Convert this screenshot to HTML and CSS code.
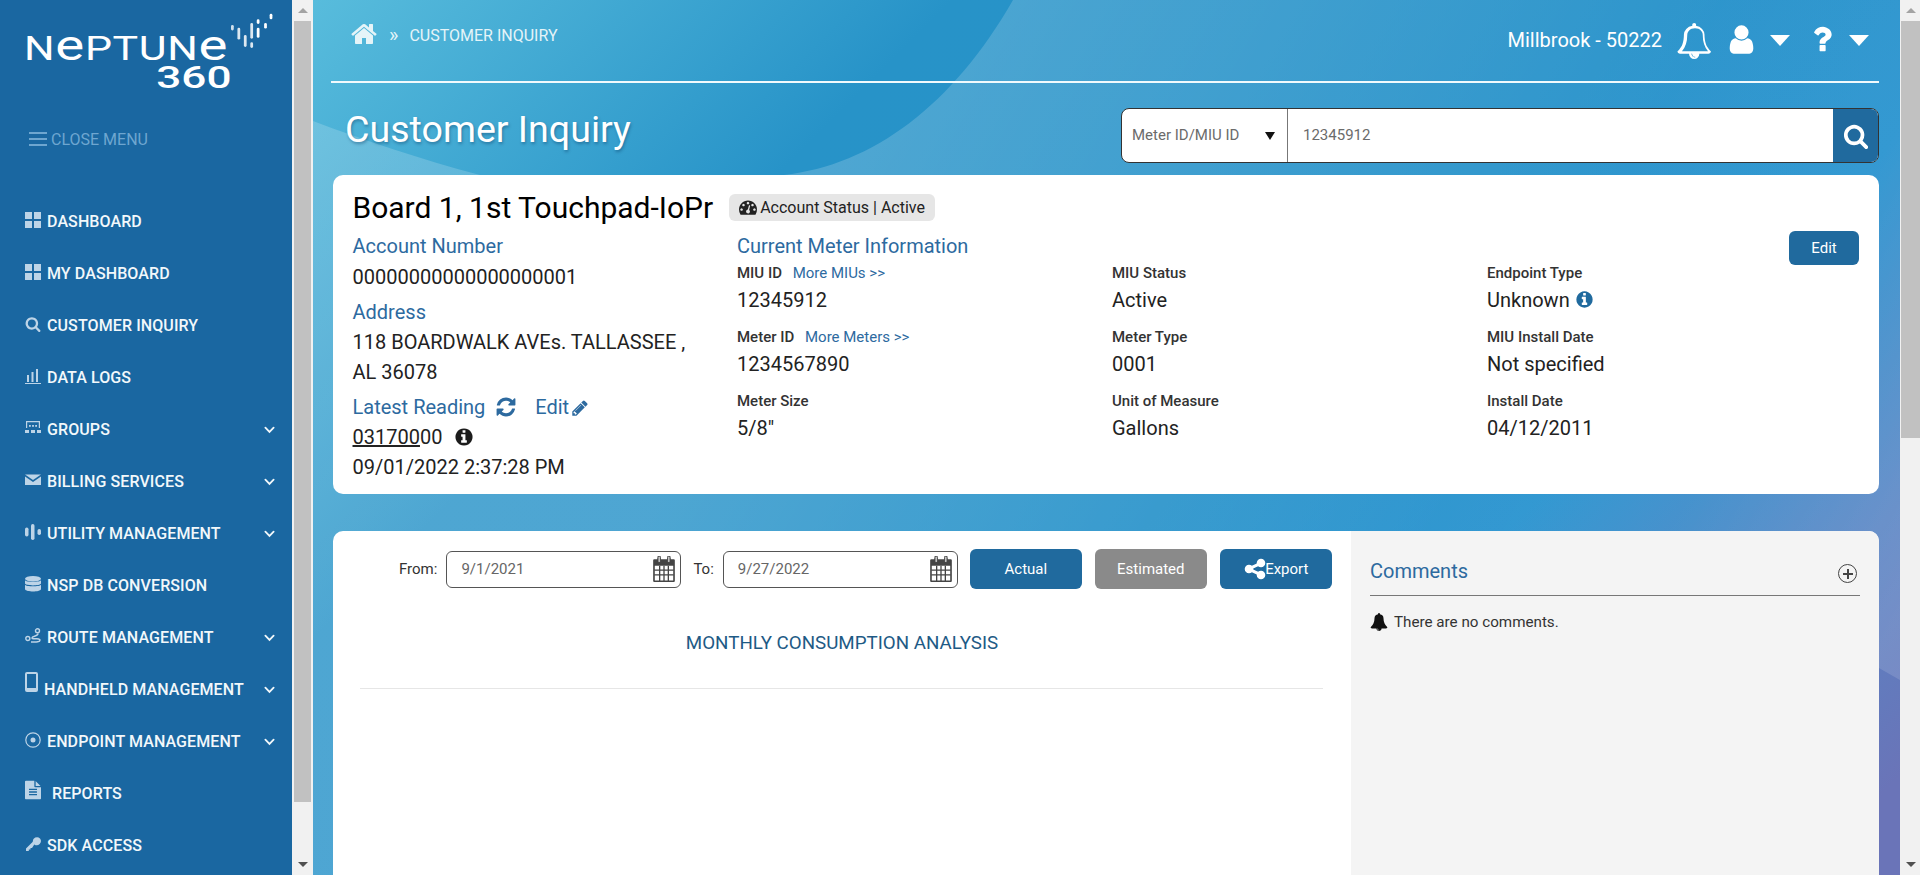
FILE: index.html
```html
<!DOCTYPE html>
<html lang="en">
<head>
    <meta charset="UTF-8">
    <meta name="viewport" content="width=device-width, initial-scale=1.0">
    <title>Customer Inquiry</title>
    <link rel="stylesheet" href="styles.css">
</head>
<body>

    <!-- Icon set -->
    <svg class="icon-defs" xmlns="http://www.w3.org/2000/svg">
        <symbol id="i-home" viewBox="0 0 1792 1792"><path d="M1472 992v480q0 26-19 45t-45 19h-384v-384h-256v384h-384q-26 0-45-19t-19-45v-480q0-1 .5-3t.5-3l575-474 575 474q1 2 1 6zm223-69l-62 74q-8 9-21 11h-3q-13 0-21-7l-692-577-692 577q-12 8-24 7-13-2-21-11l-62-74q-8-10-7-23.5t11-21.5l719-599q32-26 76-26t76 26l244 204v-195q0-14 9-23t23-9h192q14 0 23 9t9 23v408l219 182q10 8 11 21.5t-7 23.5z"/></symbol>
        <symbol id="i-search" viewBox="0 0 1792 1792"><path d="M1216 832q0-185-131.5-316.5t-316.5-131.5-316.5 131.5-131.5 316.5 131.5 316.5 316.5 131.5 316.5-131.5 131.5-316.5zm512 832q0 52-38 90t-90 38q-54 0-90-38l-343-342q-179 124-399 124-143 0-273.5-55.5t-225-150-150-225-55.5-273.5 55.5-273.5 150-225 225-150 273.5-55.5 273.5 55.5 225 150 150 225 55.5 273.5q0 220-124 399l343 343q37 37 37 90z"/></symbol>
        <symbol id="i-refresh" viewBox="0 0 1792 1792"><path d="M1639 1056q0 5-1 7-64 268-268 434.5t-478 166.5q-146 0-282.5-55t-243.5-157l-129 129q-19 19-45 19t-45-19-19-45v-448q0-26 19-45t45-19h448q26 0 45 19t19 45-19 45l-137 137q71 66 161 102t187 36q134 0 250-65t186-179q11-17 53-117 8-23 30-23h192q13 0 22.5 9.5t9.5 22.5zm25-800v448q0 26-19 45t-45 19h-448q-26 0-45-19t-19-45 19-45l138-138q-148-137-349-137-134 0-250 65t-186 179q-11 17-53 117-8 23-30 23h-199q-13 0-22.5-9.5t-9.5-22.5v-7q65-268 270-434.5t480-166.5q146 0 284 55.5t245 156.5l130-129q19-19 45-19t45 19 19 45z"/></symbol>
        <symbol id="i-pencil" viewBox="0 0 1792 1792"><path d="M491 1536l91-91-235-235-91 91v107h128v128h107zm523-928q0-22-22-22-10 0-17 7l-542 542q-7 7-7 17 0 22 22 22 10 0 17-7l542-542q7-7 7-17zm-54-192l416 416-832 832h-416v-416zm683 96q0 53-37 90l-166 166-416-416 166-165q36-38 90-38 53 0 91 38l235 234q37 39 37 91z"/></symbol>
        <symbol id="i-info" viewBox="0 0 1792 1792"><path d="M1152 1376v-160q0-14-9-23t-23-9h-96v-512q0-14-9-23t-23-9h-320q-14 0-23 9t-9 23v160q0 14 9 23t23 9h96v320h-96q-14 0-23 9t-9 23v160q0 14 9 23t23 9h448q14 0 23-9t9-23zm-128-896v-160q0-14-9-23t-23-9h-192q-14 0-23 9t-9 23v160q0 14 9 23t23 9h192q14 0 23-9t9-23zm640 416q0 209-103 385.5t-279.5 279.5-385.5 103-385.5-103-279.5-279.5-103-385.5 103-385.5 279.5-279.5 385.5-103 385.5 103 279.5 279.5 103 385.5z"/></symbol>
        <symbol id="i-user" viewBox="0 0 1792 1792"><path d="M1536 1399q0 109-62.5 187t-150.5 78h-854q-88 0-150.5-78t-62.5-187q0-85 8.5-160.5t31.5-152 58.5-131 94-89 134.5-34.5q131 128 313 128t313-128q76 0 134.5 34.5t94 89 58.5 131 31.5 152 8.5 160.5zm-256-887q0 159-112.5 271.5t-271.5 112.5-271.5-112.5-112.5-271.5 112.5-271.5 271.5-112.5 271.5 112.5 112.5 271.5z"/></symbol>
        <symbol id="i-bell-o" viewBox="0 0 1792 1792"><path d="M912 1696q0-16-16-16-59 0-101.5-42.5t-42.5-101.5q0-16-16-16t-16 16q0 73 51.5 124.5t124.5 51.5q16 0 16-16zm-666-288h1300q-266-300-266-832 0-51-24-105t-69-103-121.5-80.5-169.5-31.5-169.5 31.5-121.5 80.5-69 103-24 105q0 532-266 832zm1442 0q0 52-38 90t-90 38h-448q0 106-75 181t-181 75-181-75-75-181h-448q-52 0-90-38t-38-90q50-42 91-88t85-119.5 74.5-158.5 50-206 19.5-260q0-152 117-282.5t307-158.5q-8-19-8-39 0-40 28-68t68-28 68 28 28 68q0 20-8 39 190 28 307 158.5t117 282.5q0 139 19.5 260t50 206 74.5 158.5 85 119.5 91 88z"/></symbol>
        <symbol id="i-bell" viewBox="0 0 1792 1792"><path d="M912 1696q0-16-16-16-59 0-101.5-42.5t-42.5-101.5q0-16-16-16t-16 16q0 73 51.5 124.5t124.5 51.5q16 0 16-16zm816-288q0 52-38 90t-90 38h-448q0 106-75 181t-181 75-181-75-75-181h-448q-52 0-90-38t-38-90q190-161 287-397.5t97-498.5q0-165 96-262t264-117q-8-18-8-37 0-40 28-68t68-28 68 28 28 68q0 19-8 37 168 20 264 117t96 262q0 262 97 498.5t287 397.5z"/></symbol>
        <symbol id="i-question" viewBox="0 0 1792 1792"><path d="M1088 1256v240q0 16-12 28t-28 12h-240q-16 0-28-12t-12-28v-240q0-16 12-28t28-12h240q16 0 28 12t12 28zm316-600q0 54-15.5 101t-35 76.5-55 59.5-57.5 43.5-61 35.5q-41 23-68.5 65t-27.5 67q0 17-12 32.5t-28 15.5h-240q-15 0-25.5-18.5t-10.5-37.5v-45q0-83 65-156.5t143-108.5q59-27 84-56t25-76q0-42-46.5-74t-107.5-32q-65 0-108 29-35 25-107 115-13 16-31 16-12 0-25-8l-164-125q-13-10-15.5-25t5.5-28q160-266 464-266 80 0 161 31t146 83 106 127.5 41 158.5z"/></symbol>
        <symbol id="i-share" viewBox="0 0 1792 1792"><path d="M1344 1024q133 0 226.5 93.5t93.5 226.5-93.5 226.5-226.5 93.5-226.5-93.5-93.5-226.5q0-12 2-34l-360-180q-92 86-218 86-133 0-226.5-93.5t-93.5-226.5 93.5-226.5 226.5-93.5q126 0 218 86l360-180q-2-22-2-34 0-133 93.5-226.5t226.5-93.5 226.5 93.5 93.5 226.5-93.5 226.5-226.5 93.5q-126 0-218-86l-360 180q2 22 2 34t-2 34l360 180q92-86 218-86z"/></symbol>
        <symbol id="i-gauge" viewBox="0 0 1792 1792"><path d="M384 1152q0-53-37.5-90.5t-90.5-37.5-90.5 37.5-37.5 90.5 37.5 90.5 90.5 37.5 90.5-37.5 37.5-90.5zm192-448q0-53-37.5-90.5t-90.5-37.5-90.5 37.5-37.5 90.5 37.5 90.5 90.5 37.5 90.5-37.5 37.5-90.5zm428 481l101-382q6-26-7.5-48.5t-38.5-29.5-48 6.5-30 39.5l-101 382q-60 5-107 43.5t-63 98.5q-20 77 20 146t117 89 146-20 89-117q16-60-6-117t-72-91zm660-33q0-53-37.5-90.5t-90.5-37.5-90.5 37.5-37.5 90.5 37.5 90.5 90.5 37.5 90.5-37.5 37.5-90.5zm-640-640q0-53-37.5-90.5t-90.5-37.5-90.5 37.5-37.5 90.5 37.5 90.5 90.5 37.5 90.5-37.5 37.5-90.5zm448 192q0-53-37.5-90.5t-90.5-37.5-90.5 37.5-37.5 90.5 37.5 90.5 90.5 37.5 90.5-37.5 37.5-90.5zm320 448q0 261-141 483-19 29-54 29h-1402q-35 0-54-29-141-221-141-483 0-182 71-348t191-286 286-191 348-71 348 71 286 191 191 286 71 348z"/></symbol>
        <symbol id="i-file" viewBox="128 0 1536 1792"><path d="M1596 476q14 14 28 36h-472v-472q22 14 36 28zm-476 164h544v1056q0 40-28 68t-68 28h-1344q-40 0-68-28t-28-68v-1600q0-40 28-68t68-28h800v544q0 40 28 68t68 28zm160 736v-64q0-14-9-23t-23-9h-704q-14 0-23 9t-9 23v64q0 14 9 23t23 9h704q14 0 23-9t9-23zm0-256v-64q0-14-9-23t-23-9h-704q-14 0-23 9t-9 23v64q0 14 9 23t23 9h704q14 0 23-9t9-23zm0-256v-64q0-14-9-23t-23-9h-704q-14 0-23 9t-9 23v64q0 14 9 23t23 9h704q14 0 23-9t9-23z"/></symbol>
        <symbol id="i-grid" viewBox="0 0 16 16"><rect y="0" width="7" height="7"/><rect x="9" width="7" height="7"/><rect y="9" width="7" height="7"/><rect x="9" y="9" width="7" height="7"/></symbol>
        <symbol id="i-chart" viewBox="0 0 16 16"><rect x="2" y="7" width="2" height="7"/><rect x="6.5" y="4" width="2" height="10"/><rect x="11" y="1" width="2" height="13"/><rect y="15" width="16" height="1"/></symbol>
        <symbol id="i-groups" viewBox="0 0 16 16"><path d="M1 1h14v7h-1.2V2.2H2.200V8H1z"/><rect x="4" y="5" width="1.800" height="1.800"/><rect x="7.100" y="5" width="1.800" height="1.800"/><rect x="10.200" y="5" width="1.800" height="1.800"/><rect x="0" y="10" width="4" height="3"/><rect x="6" y="10" width="4" height="3"/><rect x="12" y="10" width="4" height="3"/></symbol>
        <symbol id="i-mail" viewBox="0 0 16 16"><path d="M0 2.500h16L8 8z"/><path d="M0 4.500V13h16V4.500L8 10z"/></symbol>
        <symbol id="i-utility" viewBox="0 0 16 16"><rect x="0" y="3.500" width="3.500" height="9" rx="1.700"/><rect x="6" y="0" width="3.500" height="16" rx="1.700"/><rect x="12.500" y="5" width="3.500" height="6" rx="1.700"/></symbol>
        <symbol id="i-db" viewBox="0 0 16 16"><ellipse cx="8" cy="2.800" rx="8" ry="2.800"/><path d="M0 4.300c1 2 15 2 16 0v3.200c-1 2.500-15 2.500-16 0z"/><path d="M0 8.800c1 2 15 2 16 0v4.400c-1 3-15 3-16 0z"/></symbol>
        <symbol id="i-route" viewBox="0 0 16 16"><circle cx="2.800" cy="10.500" r="2" fill="none" stroke="currentColor" stroke-width="1.400"/><circle cx="12.500" cy="2.800" r="2" fill="none" stroke="currentColor" stroke-width="1.400"/><path d="M13 5.500c0 3-6 2.500-6 4.500s8-.5 8 2-5 2-9 2" fill="none" stroke="currentColor" stroke-width="1.500"/></symbol>
        <symbol id="i-target" viewBox="0 0 16 16"><circle cx="8" cy="8" r="7.200" fill="none" stroke="currentColor" stroke-width="1.200"/><circle cx="8" cy="8" r="2.500"/></symbol>
        <symbol id="i-key" viewBox="0 0 16 16"><path d="M15 2.500a4.200 4.200 0 0 0-7.200 3.300L1 12.500V15h2.800v-1.500h1.700V12h1.500l2.300-3.500A4.200 4.200 0 0 0 15 2.500z"/></symbol>
        <symbol id="i-chevron" viewBox="0 0 12 8"><path d="M1.500 1.500L6 6l4.500-4.500" fill="none" stroke="currentColor" stroke-width="2" stroke-linecap="round"/></symbol>
        <symbol id="i-calendar" viewBox="0 0 22 24"><path d="M2 3h3V1.500h3V3h6V1.500h3V3h3a1 1 0 0 1 1 1v19a1 1 0 0 1-1 1H2a1 1 0 0 1-1-1V4a1 1 0 0 1 1-1z" fill="#444"/><path d="M2.500 9h17v13.500h-17z" fill="#fff"/><path d="M7 9v14M11 9v14M15 9v14M2 13h18M2 17.500h18" stroke="#444" stroke-width="1.200"/><rect x="5.500" y="0" width="2" height="6" rx="1" fill="#fff" stroke="#444"/><rect x="14.500" y="0" width="2" height="6" rx="1" fill="#fff" stroke="#444"/></symbol>
    </svg>

    <aside class="sidebar">
        <div class="logo">
            <div class="logo-name">N<span class="logo-e">e</span>PTUN<span class="logo-e">e</span></div>
            <div class="logo-sub"><span>360</span></div>
            <!-- Signal dots next to the logo -->
            <svg class="logo-signal" viewBox="0 0 50 50" fill="#fff">
                <rect x="0" y="14" width="3" height="6" rx="1.500" opacity=".8"/>
                <rect x="7" y="17" width="3" height="13" rx="1.500" opacity=".85"/>
                <rect x="14" y="25" width="3" height="13" rx="1.500" opacity=".85"/>
                <rect x="21" y="12" width="3" height="17" rx="1.500" opacity=".85"/>
                <rect x="21" y="33" width="3" height="6" rx="1.500" opacity=".85"/>
                <rect x="28" y="8" width="3" height="5" rx="1.500"/>
                <rect x="28" y="17" width="3" height="11" rx="1.500"/>
                <rect x="36" y="12" width="3" height="6" rx="1.500"/>
                <rect x="42" y="2" width="3" height="6" rx="1.500"/>
            </svg>
        </div>

        <div class="close-menu">
            <span class="burger"></span>
            CLOSE MENU
        </div>

        <ul class="menu">
            <li class="menu-item"><svg class="menu-icon"><use href="#i-grid"/></svg>Dashboard</li>
            <li class="menu-item"><svg class="menu-icon"><use href="#i-grid"/></svg>My Dashboard</li>
            <li class="menu-item"><svg class="menu-icon"><use href="#i-search"/></svg>Customer Inquiry</li>
            <li class="menu-item"><svg class="menu-icon"><use href="#i-chart"/></svg>Data Logs</li>
            <li class="menu-item"><svg class="menu-icon"><use href="#i-groups"/></svg>Groups<svg class="chevron"><use href="#i-chevron"/></svg></li>
            <li class="menu-item"><svg class="menu-icon"><use href="#i-mail"/></svg>Billing Services<svg class="chevron"><use href="#i-chevron"/></svg></li>
            <li class="menu-item"><svg class="menu-icon"><use href="#i-utility"/></svg>Utility Management<svg class="chevron"><use href="#i-chevron"/></svg></li>
            <li class="menu-item"><svg class="menu-icon"><use href="#i-db"/></svg>NSP DB Conversion</li>
            <li class="menu-item"><svg class="menu-icon"><use href="#i-route"/></svg>Route Management<svg class="chevron"><use href="#i-chevron"/></svg></li>
            <li class="menu-item"><span class="phone-icon"></span>Handheld Management<svg class="chevron"><use href="#i-chevron"/></svg></li>
            <li class="menu-item"><svg class="menu-icon"><use href="#i-target"/></svg>Endpoint Management<svg class="chevron"><use href="#i-chevron"/></svg></li>
            <li class="menu-item"><svg class="file-icon"><use href="#i-file"/></svg>Reports</li>
            <li class="menu-item"><svg class="menu-icon"><use href="#i-key"/></svg>SDK Access</li>
        </ul>
    </aside>

    <div class="scrollbar scrollbar-side">
        <span class="arrow-up"></span>
        <span class="thumb"></span>
        <span class="arrow-down"></span>
    </div>

    <main class="main">
        <!-- Swoosh shapes behind the page content -->
        <svg class="main-bg" viewBox="0 0 1587 875">
            <defs>
                <linearGradient id="swoosh" gradientUnits="userSpaceOnUse" x1="0" y1="0" x2="1587" y2="875">
                    <stop offset="0.3" stop-color="#fff" stop-opacity=".18"/>
                    <stop offset="0.68" stop-color="#fff" stop-opacity=".03"/>
                    <stop offset="0.8" stop-color="#fff" stop-opacity=".04"/>
                    <stop offset="0.93" stop-color="#fff" stop-opacity=".13"/>
                </linearGradient>
            </defs>
            <path fill="url(#swoosh)" d="M700 0C640 105 560 165 471 175C380 200 280 205 167 175C110 160 50 140 0 121V875H1200L1566 668L1587 680V0Z"/>
        </svg>

        <header class="topbar">
            <div class="breadcrumb">
                <svg class="crumb-home"><use href="#i-home"/></svg>
                <span class="crumb-sep">»</span>
                <span>CUSTOMER INQUIRY</span>
            </div>
            <div class="top-actions">
                <span class="site-name">Millbrook - 50222</span>
                <svg class="top-bell"><use href="#i-bell-o"/></svg>
                <svg class="top-user"><use href="#i-user"/></svg>
                <span class="caret"></span>
                <svg class="top-help"><use href="#i-question"/></svg>
                <span class="caret caret-last"></span>
            </div>
        </header>

        <div class="title-row">
            <h1>Customer Inquiry</h1>
            <div class="search-box">
                <div class="search-type">Meter ID/MIU ID<span class="search-arrow"></span></div>
                <div class="search-value">12345912</div>
                <div class="search-btn"><svg><use href="#i-search"/></svg></div>
            </div>
        </div>

        <section class="account-card">
            <div class="account-head">
                <h2>Board 1, 1st Touchpad-IoPr</h2>
                <span class="status-badge"><svg><use href="#i-gauge"/></svg>Account Status | Active</span>
            </div>
            <div class="account-body">
                <div class="account-left">
                    <div class="blue-label label-first">Account Number</div>
                    <div class="line">00000000000000000001</div>
                    <div class="blue-label">Address</div>
                    <div class="line">118 BOARDWALK AVEs. TALLASSEE ,</div>
                    <div class="line">AL 36078</div>
                    <div class="blue-label">
                        Latest Reading
                        <svg class="refresh-icon"><use href="#i-refresh"/></svg>
                        <span class="edit-link">Edit</span>
                        <svg class="pencil-icon"><use href="#i-pencil"/></svg>
                    </div>
                    <div class="line"><span class="underlined">031700</span>00<svg class="reading-info"><use href="#i-info"/></svg></div>
                    <div class="line">09/01/2022 2:37:28 PM</div>
                </div>
                <div class="meter-info">
                    <div class="blue-label">Current Meter Information</div>
                    <div class="meter-grid">
                        <div class="field"><div class="field-label">MIU ID <a class="more-link">More MIUs &gt;&gt;</a></div><div class="field-value">12345912</div></div>
                        <div class="field"><div class="field-label">MIU Status</div><div class="field-value">Active</div></div>
                        <div class="field"><div class="field-label">Endpoint Type</div><div class="field-value">Unknown <svg class="endpoint-info"><use href="#i-info"/></svg></div></div>
                        <div class="field"><div class="field-label">Meter ID <a class="more-link">More Meters &gt;&gt;</a></div><div class="field-value">1234567890</div></div>
                        <div class="field"><div class="field-label">Meter Type</div><div class="field-value">0001</div></div>
                        <div class="field"><div class="field-label">MIU Install Date</div><div class="field-value">Not specified</div></div>
                        <div class="field"><div class="field-label">Meter Size</div><div class="field-value">5/8"</div></div>
                        <div class="field"><div class="field-label">Unit of Measure</div><div class="field-value">Gallons</div></div>
                        <div class="field"><div class="field-label">Install Date</div><div class="field-value">04/12/2011</div></div>
                    </div>
                </div>
                <button class="btn btn-edit">Edit</button>
            </div>
        </section>

        <section class="chart-card">
            <div class="chart-panel">
                <div class="chart-toolbar">
                    <label>From:</label>
                    <div class="date-input">9/1/2021<svg><use href="#i-calendar"/></svg></div>
                    <label>To:</label>
                    <div class="date-input">9/27/2022<svg><use href="#i-calendar"/></svg></div>
                    <button class="btn btn-range">Actual</button>
                    <button class="btn btn-range btn-gray">Estimated</button>
                    <button class="btn btn-range"><svg class="share-icon"><use href="#i-share"/></svg>Export</button>
                </div>
                <h3>MONTHLY CONSUMPTION ANALYSIS</h3>
                <hr>
            </div>
            <div class="comments">
                <div class="comments-head">
                    <span>Comments</span>
                    <span class="add-comment"></span>
                </div>
                <p><svg><use href="#i-bell"/></svg>There are no comments.</p>
            </div>
        </section>
    </main>

    <div class="scrollbar scrollbar-main">
        <span class="arrow-up"></span>
        <span class="thumb"></span>
        <span class="arrow-down"></span>
    </div>

</body>
</html>
```

FILE: styles.css
```css
* {
    box-sizing: border-box;
}

html, body {
    margin: 0;
    height: 875px;
    overflow: hidden;
}

body {
    display: flex;
    font-family: Roboto, "Liberation Sans", sans-serif;
    color: #222;
    background-color: #f1f1f1;
}

.icon-defs {
    display: none;
}

svg {
    fill: currentColor;
}

/* Sidebar */
.sidebar {
    width: 292px;
    height: 875px;
    flex: none;
    background-color: #1a67a1;
    color: #f2f8fb;
}

.logo {
    position: relative;
    height: 100px;
    padding: 31px 0 0 24px;
    color: #fff;
}

.logo-name {
    height: 36px;
    font-size: 33px;
    line-height: 36px;
    font-weight: 400;
    letter-spacing: 0.5px;
    white-space: nowrap;
    transform: scaleX(1.3);
    transform-origin: left center;
}

.logo-e {
    font-size: 42px;
    line-height: 30px;
}

.logo-sub {
    width: 208px;
    height: 20px;
    text-align: right;
    font-size: 32px;
    line-height: 20px;
    font-weight: 500;
}

.logo-sub span {
    display: inline-block;
    transform: scaleX(1.38);
    transform-origin: right center;
}

.logo-signal {
    position: absolute;
    left: 231px;
    top: 12px;
    width: 46px;
    height: 46px;
}

.close-menu {
    display: flex;
    align-items: center;
    height: 30px;
    margin-top: 24px;
    padding-left: 29px;
    font-size: 16px;
    color: #6ea6d0;
}

.burger {
    width: 18px;
    height: 14px;
    margin-right: 4px;
    border-top: 2px solid #6ea6d0;
    border-bottom: 2px solid #6ea6d0;
    position: relative;
}

.burger::after {
    content: "";
    position: absolute;
    left: 0;
    right: 0;
    top: 4px;
    height: 2px;
    background-color: #6ea6d0;
}

.menu {
    list-style: none;
    margin: 41px 0 0;
    padding: 0;
}

.menu-item {
    display: flex;
    align-items: center;
    position: relative;
    height: 52px;
    padding-left: 25px;
    font-size: 16px;
    font-weight: 500;
    letter-spacing: 0.1px;
    text-transform: uppercase;
    white-space: nowrap;
}

.menu-icon {
    width: 16px;
    height: 16px;
    margin-right: 6px;
    color: #bdd4e7;
    margin-top: -2px;
}

.phone-icon {
    width: 13px;
    height: 20px;
    margin-right: 6px;
    margin-top: -14px;
    border: 2px solid #bdd4e7;
    border-bottom-width: 4px;
    border-radius: 2px;
}

.file-icon {
    width: 16px;
    height: 22px;
    margin-right: 11px;
    margin-top: -6px;
    color: #bdd4e7;
}

.chevron {
    position: absolute;
    left: 264px;
    top: 23px;
    width: 11px;
    height: 8px;
}

/* Drawn scrollbars */
.scrollbar {
    display: flex;
    flex-direction: column;
    align-items: center;
    flex: none;
    height: 875px;
    background-color: #f1f1f1;
}

.scrollbar-side {
    width: 21px;
}

.scrollbar-main {
    width: 21px;
}

.thumb {
    width: 17px;
    background-color: #c1c1c1;
    margin-top: 8px;
}

.scrollbar-side .thumb {
    height: 781px;
}

.scrollbar-main .thumb {
    width: 19px;
    height: 417px;
}

.arrow-up {
    margin-top: 8px;
    border-left: 5px solid transparent;
    border-right: 5px solid transparent;
    border-bottom: 5px solid #a3a3a3;
}

.arrow-down {
    margin-top: auto;
    margin-bottom: 8px;
    border-left: 5px solid transparent;
    border-right: 5px solid transparent;
    border-top: 5px solid #505050;
}

/* Main column */
.main {
    position: relative;
    width: 1587px;
    height: 875px;
    flex: none;
    overflow: hidden;
    padding: 0 21px 0 20px;
    background: linear-gradient(135deg, #58bcdc 0%, #2793c8 26%, #2792ca 55%, #2c95d0 70%, #5884c4 85%, #6a74b8 96%);
}

.main-bg {
    position: absolute;
    left: 0;
    top: 0;
    width: 1587px;
    height: 875px;
}

.topbar, .title-row, .account-card, .chart-card {
    position: relative;
}

.topbar {
    display: flex;
    justify-content: space-between;
    height: 83px;
    margin-left: -2px;
    border-bottom: 2px solid #f1fafd;
    color: #fff;
}

.breadcrumb {
    display: flex;
    align-items: center;
    height: 70px;
    padding-left: 19px;
    font-size: 16px;
    color: #e5f4f8;
}

.crumb-home {
    width: 28px;
    height: 28px;
    margin-top: -2px;
}

.crumb-sep {
    margin: 0 11px 0 11px;
    font-size: 20px;
    line-height: 20px;
}

.top-actions {
    display: flex;
    align-items: center;
    height: 80px;
    font-size: 20px;
    padding-right: 10px;
}

.top-bell {
    width: 36px;
    height: 36px;
    margin-left: 15px;
    margin-top: 1px;
}

.top-user {
    width: 33px;
    height: 33px;
    margin-left: 12px;
    margin-top: -2px;
}

.top-help {
    width: 34px;
    height: 34px;
    margin-left: 15px;
    margin-top: -2px;
}

.caret {
    margin-left: 12px;
    border-left: 10px solid transparent;
    border-right: 10px solid transparent;
    border-top: 11px solid #fff;
}

.caret-last {
    margin-left: 10px;
}

.title-row {
    display: flex;
    justify-content: space-between;
    height: 92px;
}

h1 {
    margin: 21px 0 0 12px;
    font-size: 37.6px;
    line-height: 50px;
    font-weight: 400;
    color: #fff;
    text-shadow: 1px 2px 3px rgba(0, 40, 80, 0.35);
}

.search-box {
    display: flex;
    width: 758px;
    height: 55px;
    margin-top: 25px;
    background-color: #fff;
    border: 1px solid #333;
    border-radius: 8px;
    overflow: hidden;
    font-size: 15px;
    line-height: 53px;
    color: #6b6b6b;
}

.search-type {
    display: flex;
    align-items: center;
    justify-content: space-between;
    width: 166px;
    padding: 0 12px 0 10px;
    border-right: 1px solid #777;
}

.search-arrow {
    border-left: 5px solid transparent;
    border-right: 5px solid transparent;
    border-top: 8px solid #111;
}

.search-value {
    flex: 1;
    padding-left: 15px;
}

.search-btn {
    display: flex;
    align-items: center;
    justify-content: center;
    width: 45px;
    background-color: #206a9e;
    color: #fff;
}

.search-btn svg {
    width: 26px;
    height: 26px;
}

/* Account card */
.account-card {
    height: 319px;
    background-color: #fff;
    border-radius: 10px;
    padding: 12px 20px 0 19.5px;
}

.account-head {
    display: flex;
    align-items: center;
    height: 40px;
}

h2 {
    margin: 0;
    font-size: 30px;
    font-weight: 400;
    color: #000;
}

.status-badge {
    display: flex;
    align-items: center;
    height: 27px;
    margin-left: 16px;
    padding: 0 10px 0 10px;
    background-color: #e6e6e6;
    border-radius: 6px;
    font-size: 16px;
    color: #222;
}

.status-badge svg {
    width: 18px;
    height: 18px;
    margin-right: 3px;
}

.account-body {
    display: flex;
    position: relative;
}

.blue-label {
    font-size: 20px;
    line-height: 30px;
    height: 30px;
    color: #2d6a9f;
    white-space: nowrap;
}

.label-first {
    height: 31px;
}

.account-left {
    width: 384.5px;
    margin-top: 4px;
}

.line {
    font-size: 20px;
    line-height: 30px;
    height: 30px;
    margin-bottom: 0;
    white-space: nowrap;
    color: #222;
}

.account-left .line + .blue-label {
    margin-top: 5px;
}

.underlined {
    text-decoration: underline;
}

.refresh-icon {
    width: 22px;
    height: 22px;
    margin-left: 5px;
    vertical-align: -4px;
}

.edit-link {
    margin-left: 13px;
}

.pencil-icon {
    width: 18px;
    height: 18px;
    margin-left: -3px;
    vertical-align: -3px;
}

.reading-info {
    width: 20px;
    height: 20px;
    margin-left: 12px;
    vertical-align: -3px;
    color: #1c1c1c;
}

.meter-info {
    width: 1100px;
    margin-top: 4px;
}

.meter-grid {
    display: grid;
    grid-template-columns: 375px 375px 350px;
}

.field {
    height: 64px;
    padding-top: 2px;
}

.field-label {
    font-size: 15px;
    line-height: 20px;
    font-weight: 500;
    color: #333;
}

.more-link {
    margin-left: 7px;
    font-weight: 400;
    color: #2d6a9f;
}

.field-value {
    font-size: 20px;
    line-height: 34px;
    color: #222;
}

.endpoint-info {
    width: 19px;
    height: 19px;
    vertical-align: -2px;
    color: #206a9e;
}

.btn {
    border: none;
    border-radius: 6px;
    background-color: #206a9e;
    color: #fff;
    font-family: inherit;
    font-size: 15px;
}

.btn-edit {
    position: absolute;
    right: 0;
    top: 4px;
    width: 70px;
    height: 34px;
}

/* Chart card */
.chart-card {
    display: flex;
    height: 400px;
    margin-top: 37px;
    background-color: #fff;
    border-radius: 10px;
    overflow: hidden;
}

.chart-panel {
    width: 1018px;
    padding: 18px 0 0;
}

.chart-toolbar {
    display: flex;
    align-items: center;
    height: 40px;
    padding-left: 66px;
    font-size: 15px;
}

.chart-toolbar label {
    color: #333;
}

.date-input {
    display: flex;
    align-items: center;
    justify-content: space-between;
    width: 235px;
    height: 37px;
    margin-left: 9px;
    margin-right: 12px;
    padding: 0 4px 0 14px;
    border: 1px solid #555;
    border-radius: 6px;
    color: #666;
}

.date-input svg {
    width: 24px;
    height: 26px;
}

.btn-range {
    display: flex;
    align-items: center;
    justify-content: center;
    width: 112px;
    height: 40px;
    margin-right: 13px;
}

.btn-gray {
    background-color: #8a8a8a;
}

.share-icon {
    width: 24px;
    height: 24px;
    margin-right: -2px;
}

h3 {
    margin: 42px 0 0;
    text-align: center;
    font-size: 18.75px;
    line-height: 24px;
    font-weight: 400;
    color: #1e5a85;
}

hr {
    margin: 33px 0 0 27px;
    width: 963px;
    border: none;
    border-top: 1px solid #e6e6e6;
}

.comments {
    flex: 1;
    padding: 0 19px;
    background-color: #f4f4f4;
}

.comments-head {
    position: relative;
    height: 65px;
    padding-top: 26px;
    border-bottom: 1px solid #777;
    font-size: 20px;
    line-height: 28px;
    color: #2d6a9f;
}

.add-comment {
    position: absolute;
    right: 3px;
    top: 33px;
    width: 19px;
    height: 19px;
    border: 1px solid #444;
    border-radius: 50%;
    background:
        linear-gradient(#444, #444) center / 10px 2px no-repeat,
        linear-gradient(#444, #444) center / 2px 10px no-repeat;
}

.comments p {
    display: flex;
    align-items: center;
    margin: 16px 0 0;
    font-size: 15.2px;
    line-height: 20px;
    color: #333;
}

.comments p svg {
    width: 18px;
    height: 18px;
    margin-right: 6px;
    color: #111;
}
```
